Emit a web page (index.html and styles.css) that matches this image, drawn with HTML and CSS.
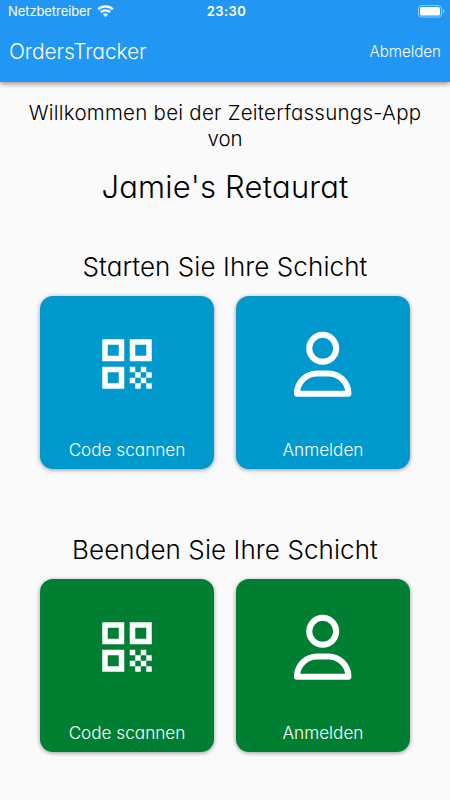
FILE: index.html
```html
<!DOCTYPE html>
<html lang="de">
<head>
<meta charset="utf-8">
<title>OrdersTracker</title>
<link rel="stylesheet" href="styles.css">
</head>
<body>
<svg width="0" height="0" class="symbols" aria-hidden="true">
  <symbol id="qr" viewBox="0 0 24 24"><path fill="currentColor" d="M3 11h8V3H3zm2-6h4v4H5zM3 21h8v-8H3zm2-6h4v4H5zM13 3v8h8V3zm6 6h-4V5h4zM19 19h2v2h-2zM13 13h2v2h-2zM15 15h2v2h-2zM13 17h2v2h-2zM15 19h2v2h-2zM17 17h2v2h-2zM17 13h2v2h-2zM19 15h2v2h-2z"/></symbol>
  <symbol id="person" viewBox="0 0 66 66"><g fill="none" stroke="currentColor" stroke-width="6" stroke-linejoin="round"><circle cx="32.700" cy="17.300" r="13.5"/><path d="M7 62.700V62.200A20 20 0 0 1 27 42.500H38.400A20 20 0 0 1 58.400 62.200V62.700Z"/></g></symbol>
</svg>
<header class="appbar">
  <div class="status">
    <div class="carrier"><span class="carrier-name">Netzbetreiber</span>
      <svg class="wifi" viewBox="0 0 17 12"><g fill="none" stroke="#fff" stroke-width="2.300"><path d="M1.200 4.400A10.500 10.500 0 0 1 15.800 4.400"/><path d="M3.900 7.300A6.500 6.500 0 0 1 13.100 7.300"/></g><path fill="#fff" d="M8.500 12 5.900 9.400A3.800 3.800 0 0 1 11.100 9.400Z"/></svg>
    </div>
    <span class="time">23:30</span>
    <svg class="battery" viewBox="0 0 27 13"><rect x=".5" y=".5" width="23" height="11.500" rx="3" fill="none" stroke="#fff" stroke-opacity=".5"/><rect x="2" y="2" width="20" height="8.500" rx="1.600" fill="#fff"/><path d="M25 4.200a2.300 2.300 0 0 1 0 4.200z" fill="#fff" fill-opacity=".55"/></svg>
  </div>
  <div class="toolbar"><h1 class="title">OrdersTracker</h1><a class="logout">Abmelden</a></div>
</header>
<main>
  <p class="welcome"><span class="welcome-line">Willkommen bei der Zeiterfassungs-App</span><br>von</p>
  <p class="place">Jamie's Retaurat</p>
  <section class="shift start">
    <h2 class="heading">Starten Sie Ihre Schicht</h2>
    <div class="cards">
      <div class="card"><svg class="icon"><use href="#qr"/></svg><span class="label">Code scannen</span></div>
      <div class="card"><svg class="icon"><use href="#person"/></svg><span class="label">Anmelden</span></div>
    </div>
  </section>
  <section class="shift end">
    <h2 class="heading">Beenden Sie Ihre Schicht</h2>
    <div class="cards">
      <div class="card"><svg class="icon"><use href="#qr"/></svg><span class="label">Code scannen</span></div>
      <div class="card"><svg class="icon"><use href="#person"/></svg><span class="label">Anmelden</span></div>
    </div>
  </section>
</main>
</body>
</html>
```
FILE: styles.css
```css
* { box-sizing: border-box; }
body {
  margin: 0;
  height: 800px;
  overflow: hidden;
  background: #fafafa;
  color: #000;
  font-family: Inter, "Open Sans", sans-serif;
  font-weight: 300;
  font-feature-settings: "cv11";
}
h1, h2, p { margin: 0; font-weight: 300; white-space: nowrap; }
.symbols { position: absolute; }
.appbar {
  height: 82px;
  background: #2196f3;
  color: #fff;
  box-shadow: 0 2px 5px rgba(0, 0, 0, .4);
}
.status {
  display: grid;
  grid-template-columns: 1fr auto 1fr;
  align-items: center;
  height: 22px;
  padding: 0 5px 0 8px;
}
.carrier { display: flex; align-items: center; gap: 6px; }
.carrier-name { font-size: 13px; font-weight: 400; letter-spacing: -.08px; }
.wifi { width: 17px; height: 12px; }
.time { font-size: 13px; font-weight: 600; letter-spacing: .4px; }
.battery { width: 27px; height: 13px; justify-self: end; }
.toolbar {
  display: flex;
  justify-content: space-between;
  align-items: center;
  height: 58px;
  padding: 0 9px;
}
.title { font-size: 21px; letter-spacing: -.1px; }
.logout { font-size: 15.200px; letter-spacing: -.05px; }
.welcome { padding-top: 18px; font-size: 20.500px; line-height: 26px; text-align: center; }
.welcome-line { letter-spacing: .25px; }
.place { margin-top: 15px; font-size: 31px; line-height: 40px; letter-spacing: .22px; text-align: center; }
.shift { padding: 0 40px; }
.start { margin-top: 43px; }
.end { margin-top: 64px; }
.heading { font-size: 26px; line-height: 34px; letter-spacing: .08px; text-align: center; }
.cards { display: flex; gap: 22px; margin-top: 11.500px; }
.card {
  display: flex;
  flex-direction: column;
  align-items: center;
  justify-content: space-between;
  width: 174px;
  height: 173.500px;
  padding: 35px 0 7px;
  border-radius: 13px;
  color: #fff;
  box-shadow: 0 1px 4px rgba(0, 0, 0, .4);
}
.start .card { background: #0099ce; }
.end .card { background: #007f33; }
.icon { width: 66px; height: 66px; }
.label { font-size: 17.200px; line-height: 24px; letter-spacing: -.02px; }
```
